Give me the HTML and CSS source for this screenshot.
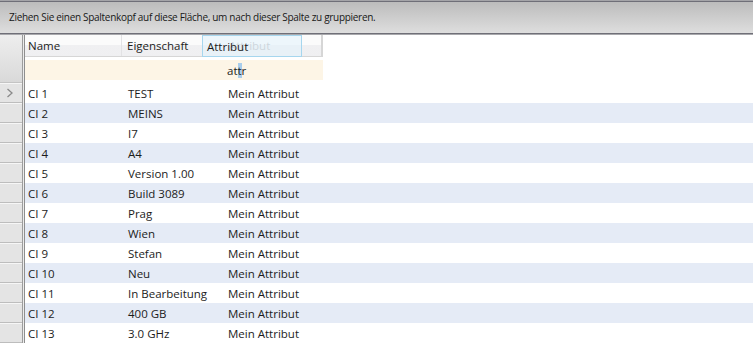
FILE: index.html
```html
<!DOCTYPE html>
<html lang="de">
<head>
<meta charset="utf-8">
<title>Grid</title>
<link rel="stylesheet" href="styles.css">
</head>
<body>
<div class="groupbar"><span class="grouptext">Ziehen Sie einen Spaltenkopf auf diese Fläche, um nach dieser Spalte zu gruppieren.</span></div>
<div class="grid">
  <div class="rowheaders">
    <div class="rh-top"></div>
    <div class="rh current"><svg width="8" height="10" viewBox="0 0 8 10"><path d="M1.5 1 L6 5 L1.5 9" fill="none" stroke="#8a8a8a" stroke-width="1.3"/></svg></div>
    <div class="rh"></div><div class="rh"></div><div class="rh"></div><div class="rh"></div>
    <div class="rh"></div><div class="rh"></div><div class="rh"></div><div class="rh"></div>
    <div class="rh"></div><div class="rh"></div><div class="rh"></div><div class="rh"></div>
  </div>
  <div class="splitter"></div>
  <div class="main">
    <div class="headrow">
      <div class="hcell c-name">Name</div>
      <div class="hcell c-eig">Eigenschaft</div>
      <div class="hcell c-attr"><span class="ghost-text">Attribut</span></div>
      <div class="dragbox">Attribut</div>
    </div>
    <div class="filterrow">
      <div class="fcell">at<span class="caret">t</span>r</div>
    </div>
    <div class="rows">
      <div class="row"><span class="cell">CI 1</span><span class="cell">TEST</span><span class="cell">Mein Attribut</span></div>
      <div class="row alt"><span class="cell">CI 2</span><span class="cell">MEINS</span><span class="cell">Mein Attribut</span></div>
      <div class="row"><span class="cell">CI 3</span><span class="cell">I7</span><span class="cell">Mein Attribut</span></div>
      <div class="row alt"><span class="cell">CI 4</span><span class="cell">A4</span><span class="cell">Mein Attribut</span></div>
      <div class="row"><span class="cell">CI 5</span><span class="cell">Version 1.00</span><span class="cell">Mein Attribut</span></div>
      <div class="row alt"><span class="cell">CI 6</span><span class="cell">Build 3089</span><span class="cell">Mein Attribut</span></div>
      <div class="row"><span class="cell">CI 7</span><span class="cell">Prag</span><span class="cell">Mein Attribut</span></div>
      <div class="row alt"><span class="cell">CI 8</span><span class="cell">Wien</span><span class="cell">Mein Attribut</span></div>
      <div class="row"><span class="cell">CI 9</span><span class="cell">Stefan</span><span class="cell">Mein Attribut</span></div>
      <div class="row alt"><span class="cell">CI 10</span><span class="cell">Neu</span><span class="cell">Mein Attribut</span></div>
      <div class="row"><span class="cell">CI 11</span><span class="cell">In Bearbeitung</span><span class="cell">Mein Attribut</span></div>
      <div class="row alt"><span class="cell">CI 12</span><span class="cell">400 GB</span><span class="cell">Mein Attribut</span></div>
      <div class="row"><span class="cell">CI 13</span><span class="cell">3.0 GHz</span><span class="cell">Mein Attribut</span></div>
    </div>
  </div>
</div>
</body>
</html>
```
FILE: styles.css
```css
html, body {
  margin: 0;
  padding: 0;
  background: #ffffff;
  font-family: "Open Sans", "Noto Sans", sans-serif;
  color: #1c1c1c;
}

.groupbar {
  height: 35px;
  box-sizing: border-box;
  display: flex;
  align-items: center;
  padding-left: 9px;
  padding-bottom: 2px;
  background: linear-gradient(to bottom,
    #a4a4a8 0, #a4a4a8 1px,
    #6f6f78 1px, #6f6f78 2px,
    #bcbcbc 2px, #dedede 33px,
    #6f6f78 33px, #6f6f78 34px,
    #a8a8ac 34px, #a8a8ac 35px);
}

.grouptext {
  font-size: 10px;
  letter-spacing: -0.3px;
  color: #181818;
}

.grid {
  display: flex;
  align-items: flex-start;
}

.rowheaders {
  width: 22px;
  display: flex;
  flex-direction: column;
}

.rh-top {
  height: 48px;
  box-sizing: border-box;
  background: linear-gradient(to bottom, #eeeeee, #d9d9d9);
  border-bottom: 1px solid #c4c4c4;
}

.rh {
  height: 20px;
  box-sizing: border-box;
  background: #e4e4e4;
  border-top: 1px solid #f6f6f6;
  border-bottom: 1px solid #bdbdbd;
  display: flex;
  align-items: center;
  padding-left: 6px;
}

.splitter {
  width: 3px;
  height: 308px;
  background: linear-gradient(to right, #9c9c9c 0, #9c9c9c 1px, #ececec 1px, #ececec 2px, #8e8e8e 2px, #8e8e8e 3px);
}

.main {
  flex: 1;
  display: flex;
  flex-direction: column;
}

.headrow {
  position: relative;
  width: 298px;
  height: 22px;
  box-sizing: border-box;
  display: flex;
  background: linear-gradient(to bottom, #fbfbfb 0, #fbfbfb 10px, #f0f0f2 10px, #efeff1 22px);
  border-bottom: 1px solid #d6d6d6;
  border-right: 2px solid #d6d6d6;
  font-size: 11.5px;
}

.hcell {
  display: flex;
  align-items: center;
  box-sizing: border-box;
  height: 21px;
}

.c-name {
  width: 97px;
  padding-left: 3px;
  border-right: 1px solid #e2e2e4;
}

.c-eig {
  width: 80px;
  padding-left: 5px;
}

.c-attr {
  flex: 1;
  padding-left: 27px;
}

.ghost-text {
  color: #b4b4b8;
}

.dragbox {
  position: absolute;
  left: 177px;
  top: 0;
  width: 100px;
  height: 22px;
  box-sizing: border-box;
  border: 1px solid #a6d6ee;
  background: rgba(225, 242, 252, 0.55);
  color: #1c1c1c;
  display: flex;
  align-items: center;
  padding-left: 4px;
}

.filterrow {
  margin-top: 3px;
  width: 298px;
  height: 20px;
  background: #fdf5e6;
  font-size: 11.5px;
  display: flex;
  align-items: center;
}

.fcell {
  padding-left: 202px;
}

.caret {
  background: #a9cdeb;
  display: inline-block;
  line-height: 15px;
  height: 15px;
}

.rows {
  margin-top: 3px;
  display: flex;
  flex-direction: column;
}

.row {
  height: 20px;
  display: flex;
  align-items: center;
  font-size: 11.5px;
}

.row.alt {
  background: #e5ebf6;
}

.cell {
  width: 100px;
  box-sizing: border-box;
  padding-left: 3px;
  white-space: nowrap;
}
```
